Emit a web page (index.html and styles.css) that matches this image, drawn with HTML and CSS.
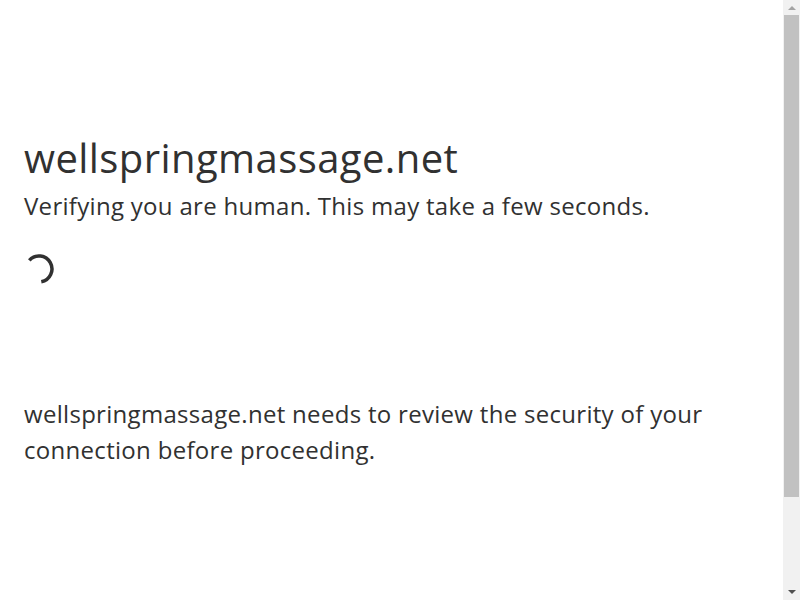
FILE: index.html
```html
<!DOCTYPE html>
<html lang="en">
<head>
  <meta charset="UTF-8" />
  <meta name="viewport" content="width=device-width, initial-scale=1.0" />
  <title>Just a moment...</title>
  <link rel="stylesheet" href="styles.css">
</head>
<body>
  <div class="main-wrapper">
    <div class="main-content">
      <h1 class="zone-name-title">wellspringmassage.net</h1>
      <h2 class="h2">Verifying you are human. This may take a few seconds.</h2>

      <!-- Challenge spinner -->
      <div class="challenge-stage">
        <svg class="spinner" width="30" height="30" viewBox="0 0 30 30">
          <path d="M5.3 6.3 A13 13 0 1 1 17.3 27.8" fill="none" stroke="#313131" stroke-width="3.5" />
        </svg>
      </div>

      <div class="core-msg">wellspringmassage.net needs to review the security of your connection before proceeding.</div>
    </div>
  </div>

  <!-- Window scrollbar -->
  <div class="scrollbar" aria-hidden="true">
    <div class="sb-arrow sb-up"></div>
    <div class="sb-thumb"></div>
    <div class="sb-arrow sb-down"></div>
  </div>
</body>
</html>
```

FILE: styles.css
```css
/* Base */
* {
  box-sizing: border-box;
  margin: 0;
  padding: 0;
}
html {
  line-height: 1.15;
}
body {
  font-family: "Open Sans", "Noto Sans", sans-serif;
  color: #313131;
  background: #fff;
  display: flex;
  flex-direction: column;
  min-height: 100vh;
  padding-right: 17px;
}
/* Layout */
.main-wrapper {
  display: flex;
  flex: 1;
  flex-direction: column;
  align-items: center;
}
.main-content {
  margin: 8rem auto 0;
  width: 100%;
  max-width: 60rem;
  padding-left: 1.5rem;
  padding-right: 1.5rem;
}
/* Titles */
.zone-name-title {
  font-size: 2.5rem;
  line-height: 3.75rem;
  font-weight: 400;
  letter-spacing: 0.42px;
}
.h2 {
  font-size: 1.5rem;
  line-height: 2.25rem;
  font-weight: 400;
  letter-spacing: 0.3px;
}
/* Spinner */
.challenge-stage {
  margin-top: 30px;
  height: 142px;
}
.spinner {
  display: block;
}
.core-msg {
  font-size: 1.5rem;
  line-height: 2.25rem;
  letter-spacing: 0.3px;
}
/* Scrollbar */
.scrollbar {
  position: fixed;
  top: 0;
  right: 0;
  bottom: 0;
  width: 17px;
  background: #f1f1f1;
  display: flex;
  flex-direction: column;
  align-items: center;
}
.sb-arrow {
  width: 0;
  height: 0;
  border-left: 4px solid transparent;
  border-right: 4px solid transparent;
}
.sb-up {
  margin-top: 6px;
  border-bottom: 4px solid #a3a3a3;
}
.sb-down {
  margin-top: auto;
  margin-bottom: 6px;
  border-top: 4px solid #505050;
}
.sb-thumb {
  margin-top: 5px;
  width: 15px;
  height: 482px;
  background: #c1c1c1;
}
```
